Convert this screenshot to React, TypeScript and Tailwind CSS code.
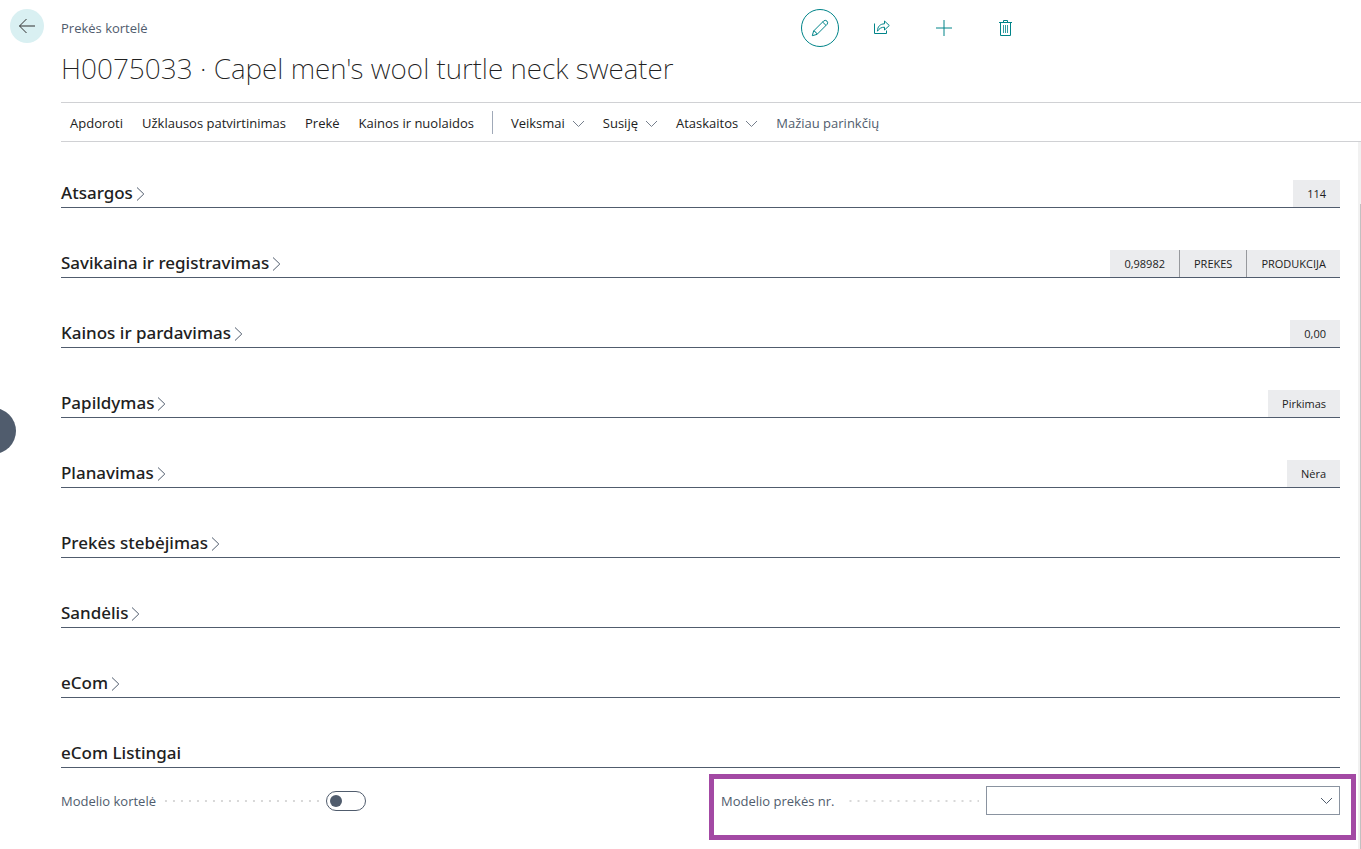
import React from "react";

type Section = { title: string; values: string[] };

const sections: Section[] = [
  { title: "Atsargos", values: ["114"] },
  { title: "Savikaina ir registravimas", values: ["0,98982", "PREKES", "PRODUKCIJA"] },
  { title: "Kainos ir pardavimas", values: ["0,00"] },
  { title: "Papildymas", values: ["Pirkimas"] },
  { title: "Planavimas", values: ["Nėra"] },
  { title: "Prekės stebėjimas", values: [] },
  { title: "Sandėlis", values: [] },
  { title: "eCom", values: [] },
];

const actions = ["Apdoroti", "Užklausos patvirtinimas", "Prekė", "Kainos ir nuolaidos"];
const menus = ["Veiksmai", "Susiję", "Ataskaitos"];

function ChevronDown({ className }: { className: string }) {
  return (
    <svg className={className} width="13" height="8" viewBox="0 0 13 8" fill="none" stroke="currentColor" aria-hidden="true">
      <path d="M1 1 L6.5 6.5 L12 1" />
    </svg>
  );
}

function ChevronRight() {
  return (
    <svg className="mt-[2px] text-[#505c6d]" width="9" height="16" viewBox="0 0 9 16" fill="none" stroke="currentColor" aria-hidden="true">
      <path d="M1 1.5 L7.8 8 L1 14.5" />
    </svg>
  );
}

function Leader() {
  return (
    <span className="mx-[7px] h-[2px] flex-1 bg-[linear-gradient(to_left,#d8d8d8_2px,transparent_2px)] bg-[length:8px_2px] bg-right bg-repeat-x" />
  );
}

function HeaderActions() {
  return (
    <div className="flex items-center gap-6 text-[#008489]">
      <button aria-label="Redaguoti" className="flex size-[38px] items-center justify-center rounded-full border border-[#008489]">
        <svg width="18" height="18" viewBox="0 0 18 18" fill="none" stroke="currentColor" strokeLinejoin="round">
          <path d="M1.3 16.7 L2.6 12 L12.6 2 Q14.2 0.6 16 2.1 Q17.4 3.8 16 5.4 L6 15.4 Z" />
          <path d="M11.6 3 L15 6.4 M2.6 12 Q4.6 12 4.6 13.6 Q6.2 13.6 6 15.4" />
        </svg>
      </button>
      <button aria-label="Bendrinti" className="flex size-[38px] items-center justify-center">
        <svg width="18" height="18" viewBox="0 0 18 18" fill="none" stroke="currentColor">
          <path d="M1.5 4.5 V14.5 H13.5 V11.5" />
          <path d="M4.5 12.2 C4.5 7.5 7 5 11.5 4.8 V2 L16.3 6.5 L11.5 11 V8.2 C8.5 8.2 6.3 9.3 4.5 12.2 Z" />
        </svg>
      </button>
      <button aria-label="Naujas" className="flex size-[38px] items-center justify-center">
        <svg width="18" height="18" viewBox="0 0 18 18" fill="none" stroke="currentColor">
          <path d="M9 1 V17 M1 9 H17" />
        </svg>
      </button>
      <button aria-label="Naikinti" className="flex size-[38px] items-center justify-center">
        <svg width="18" height="18" viewBox="0 0 18 18" fill="none" stroke="currentColor">
          <path d="M2 3.5 H15 M6.5 3.5 V1.5 H10.5 V3.5 M3.5 3.5 V16.5 H13.5 V3.5" />
          <path d="M6.5 6 V14 M8.5 6 V14 M10.5 6 V14" strokeOpacity="0.8" />
        </svg>
      </button>
    </div>
  );
}

export default function App() {
  return (
    <div className="flex min-h-screen flex-col bg-white font-['Open_Sans','Noto_Sans',sans-serif] text-[13px] text-[#212121]">
      <button aria-label="Rodyti skydelį" className="absolute top-[408px] -left-[30px] size-[46px] rounded-full bg-[#505c6d]" />

      <header className="flex">
        <div className="w-[61px] shrink-0 pt-[9px] pl-[10px]">
          <button aria-label="Atgal" className="flex size-[34px] items-center justify-center rounded-full bg-[#d9f0f2]">
            <svg width="18" height="18" viewBox="0 0 18 18" fill="none" stroke="currentColor" className="text-[#303030]">
              <path d="M17 9 H1.5 M8.5 2 L1.5 9 L8.5 16" />
            </svg>
          </button>
        </div>
        <div className="min-w-0 flex-1">
          <div className="flex items-center pt-[9px]">
            <span className="flex-1 pt-[2px] text-[#505c6d]">Prekės kortelė</span>
            <div className="w-[560px] shrink-0">
              <HeaderActions />
            </div>
          </div>
          <h1 className="pt-px font-['Noto_Sans','Open_Sans',sans-serif] text-[28px] leading-[40px] font-extralight">H0075033 · Capel men's wool turtle neck sweater</h1>
          <nav className="mt-[14px] flex h-[40px] items-center border-y border-[#d0d1d4] pl-[9px]">
            <div className="flex gap-[19px] pt-[3px]">
              {actions.map((a) => (
                <button key={a}>{a}</button>
              ))}
            </div>
            <span className="mx-[18px] h-[23px] w-px bg-[#a0a9b8]" />
            <div className="flex gap-[18px] pt-[3px]">
              {menus.map((m) => (
                <button key={m} className="flex items-center gap-[7px]">
                  {m}
                  <ChevronDown className="mt-px text-[#767f8c]" />
                </button>
              ))}
              <button className="text-[#505c6d]">Mažiau parinkčių</button>
            </div>
          </nav>
        </div>
      </header>

      <div className="flex flex-1">
        <main className="flex min-w-0 flex-1 flex-col gap-[42px] pt-[38px] pr-[18px] pl-[61px]">
          {sections.map((s) => (
            <section key={s.title} className="flex h-7 justify-between border-b border-[#505c6d]">
              <h2>
                <button className="flex h-[25px] items-center gap-[3px] font-['Noto_Sans','Open_Sans',sans-serif] text-[17px] font-medium">
                  {s.title}
                  <ChevronRight />
                </button>
              </h2>
              <div className="flex divide-x divide-[#97999d] bg-[#ebecee] text-[11px]">
                {s.values.map((v) => (
                  <span key={v} className="flex items-center px-[14px] pt-px">
                    {v}
                  </span>
                ))}
              </div>
            </section>
          ))}
          <section>
            <h2 className="flex h-7 border-b border-[#505c6d]">
              <button className="flex h-[25px] items-center font-['Noto_Sans','Open_Sans',sans-serif] text-[17px] font-medium">eCom Listingai</button>
            </h2>
            <div className="grid grid-cols-2 gap-[41px] pt-[18px] text-[#505c6d]">
              <div className="flex h-[29px] items-center">
                <label htmlFor="model-card" className="flex w-[265px] items-center">
                  <span className="pt-[2px]">Modelio kortelė</span>
                  <Leader />
                </label>
                <input
                  id="model-card"
                  type="checkbox"
                  role="switch"
                  className="h-[20px] w-[40px] appearance-none rounded-full border border-[#505c6d] bg-white before:mt-[3px] before:ml-[3px] before:block before:size-[12px] before:rounded-full before:bg-[#505c6d] before:content-['']"
                />
              </div>
              <div className="relative flex h-[29px] items-center">
                <label htmlFor="model-item" className="flex w-[265px] items-center">
                  <span className="pt-[2px] pr-[6px]">Modelio prekės nr.</span>
                  <Leader />
                </label>
                <select id="model-item" className="h-[29px] min-w-0 flex-1 appearance-none border border-[#8a93a0] bg-white px-2">
                  <option value=""></option>
                </select>
                <ChevronDown className="pointer-events-none absolute right-[7px] text-[#505c6d]" />
                <span className="pointer-events-none absolute -top-[12px] -right-[16px] -bottom-[25px] -left-[12px] border-[5px] border-[#a349a4]" />
              </div>
            </div>
          </section>
        </main>
        <div className="flex w-[3px] justify-end bg-[#f1f1f1] pt-[62px]">
          <span className="w-px bg-[#c1c1c1]" />
        </div>
      </div>
    </div>
  );
}
